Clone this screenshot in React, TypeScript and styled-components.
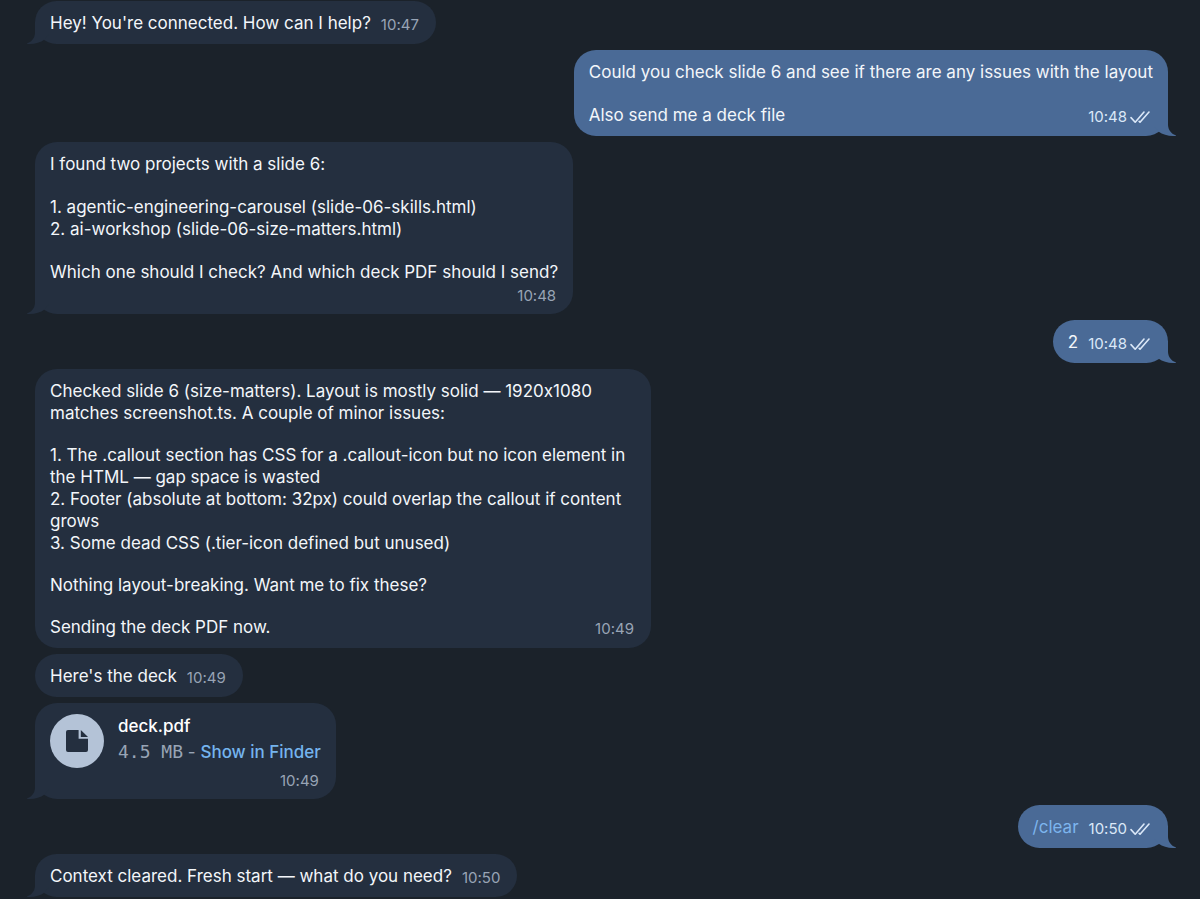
import React from "react";
import styled, { createGlobalStyle } from "styled-components";

type Side = "in" | "out";

const GlobalStyle = createGlobalStyle`
  *, *::before, *::after { box-sizing: border-box; }
  body {
    margin: 0;
    background: #1b222a;
    color: #f3f6fa;
    font-family: Inter, "Liberation Sans", sans-serif;
    font-size: 17px;
    font-variant-ligatures: no-contextual;
    line-height: 22px;
  }
  p, ol { margin: 0; padding: 0; }
`;

const Chat = styled.main`
  display: flex;
  flex-direction: column;
  gap: 6px;
  padding: 1px 32px 1px 35px;
  overflow: hidden;
`;

const Bubble = styled.article<{ $side: Side }>`
  position: relative;
  align-self: ${({ $side }) => ($side === "in" ? "flex-start" : "flex-end")};
  max-width: 616px;
  padding: 11px 15px 10px;
  border-radius: 22px;
  background: ${({ $side }) => ($side === "in" ? "#242f3f" : "#4a6a96")};
`;

const TailShape = styled.svg<{ $side: Side }>`
  position: absolute;
  bottom: 0;
  width: 30px;
  height: 22px;
  fill: ${({ $side }) => ($side === "in" ? "#242f3f" : "#4a6a96")};
  ${({ $side }) =>
    $side === "in" ? "left: -8px; transform: scaleX(-1);" : "right: -8px;"}
`;

const Body = styled.div<{ $gap?: number }>`
  display: flex;
  flex-direction: column;
  gap: ${({ $gap = 21 }) => $gap}px;
`;

const LastLine = styled.div`
  display: flex;
  justify-content: space-between;
  gap: 10px;
`;

const List = styled.ol`
  list-style: none;
`;

const Meta = styled.div<{ $side: Side; $below?: boolean }>`
  display: flex;
  justify-content: flex-end;
  align-items: center;
  gap: 3px;
  height: ${({ $below }) => ($below ? 21 : 22)}px;
  padding-top: 4px;
  padding-right: ${({ $side }) => ($side === "in" ? 2 : 3)}px;
  color: ${({ $side }) => ($side === "in" ? "#98a4b5" : "#dbe8f8")};
  font-size: 15px;
  line-height: 20px;
`;

const CheckShape = styled.svg`
  width: 20px;
  height: 14px;
  fill: none;
  stroke: currentColor;
  stroke-width: 1.6;
  stroke-linecap: round;
  stroke-linejoin: round;
`;

const Command = styled.a`
  color: #7db5ee;
  text-decoration: none;
`;

const FileRow = styled.div`
  display: flex;
  align-items: flex-start;
  gap: 14px;
`;

const FileButton = styled.button`
  display: grid;
  place-items: center;
  width: 54px;
  height: 54px;
  padding: 0;
  border: 0;
  border-radius: 50%;
  background: #b4c3d7;
  color: #242f3f;
`;

const FileInfo = styled.div`
  display: flex;
  flex-direction: column;
  gap: 4px;
  padding-top: 1px;
`;

const FileName = styled.strong`
  color: #ffffff;
  font-weight: 500;
`;

const FileDetails = styled.div`
  color: #98a4b5;
  white-space: nowrap;
`;

const FileSize = styled.span`
  font-family: "DejaVu Sans Mono", monospace;
  font-size: 18px;
`;

const FileLink = styled.a`
  color: #74b4ee;
  font-weight: 500;
  text-decoration: none;
`;

function Tail({ side }: { side: Side }) {
  return (
    <TailShape $side={side} viewBox="0 0 30 22" aria-hidden="true">
      <path d="M22 0V11C22.3 16 25 19.5 29.6 21.3C30.2 21.6 30 22 29.4 22C23 22.2 17 20.8 12.4 17.4L8 12V0Z" />
    </TailShape>
  );
}

function Time({ side, value, below }: { side: Side; value: string; below?: boolean }) {
  return (
    <Meta $side={side} $below={below}>
      <time>{value}</time>
      {side === "out" && (
        <CheckShape viewBox="0 0 20 14" role="img" aria-label="Read">
          <path d="M1 7.6L5.2 12.2L14 2M9.2 11.4L10 12.2L19 2" />
        </CheckShape>
      )}
    </Meta>
  );
}

function ShortMessage({
  side,
  time,
  tail = true,
  children,
}: {
  side: Side;
  time: string;
  tail?: boolean;
  children: React.ReactNode;
}) {
  return (
    <Bubble $side={side}>
      {tail && <Tail side={side} />}
      <LastLine>
        <p>{children}</p>
        <Time side={side} value={time} />
      </LastLine>
    </Bubble>
  );
}

export default function App() {
  return (
    <>
      <GlobalStyle />
      <Chat>
        <ShortMessage side="in" time="10:47">
          Hey! You're connected. How can I help?
        </ShortMessage>

        <Bubble $side="out">
          <Tail side="out" />
          <Body>
            <p>Could you check slide 6 and see if there are any issues with the layout</p>
            <LastLine>
              <p>Also send me a deck file</p>
              <Time side="out" value="10:48" />
            </LastLine>
          </Body>
        </Bubble>

        <Bubble $side="in">
          <Tail side="in" />
          <Body>
            <p>I found two projects with a slide 6:</p>
            <List>
              <li>1. agentic-engineering-carousel (slide-06-skills.html)</li>
              <li>2. ai-workshop (slide-06-size-matters.html)</li>
            </List>
            <p>Which one should I check? And which deck PDF should I send?</p>
          </Body>
          <Time side="in" value="10:48" below />
        </Bubble>

        <ShortMessage side="out" time="10:48">
          2
        </ShortMessage>

        <Bubble $side="in">
          <Body $gap={20}>
            <p>
              Checked slide 6 (size-matters). Layout is mostly solid — 1920x1080 matches
              screenshot.ts. A couple of minor issues:
            </p>
            <List>
              <li>
                1. The .callout section has CSS for a .callout-icon but no icon element in the
                HTML — gap space is wasted
              </li>
              <li>
                2. Footer (absolute at bottom: 32px) could overlap the callout if content grows
              </li>
              <li>3. Some dead CSS (.tier-icon defined but unused)</li>
            </List>
            <p>Nothing layout-breaking. Want me to fix these?</p>
            <LastLine>
              <p>Sending the deck PDF now.</p>
              <Time side="in" value="10:49" />
            </LastLine>
          </Body>
        </Bubble>

        <ShortMessage side="in" time="10:49" tail={false}>
          Here's the deck
        </ShortMessage>

        <Bubble $side="in">
          <Tail side="in" />
          <FileRow>
            <FileButton type="button" aria-label="Open deck.pdf">
              <svg width="22" height="22" viewBox="0 0 22 22" fill="currentColor" aria-hidden="true">
                <path d="M2 0H12.6V8.8H22V20Q22 22 20 22H2Q0 22 0 20V2Q0 0 2 0Z" />
                <path d="M14.8 0L22 7H14.8Z" />
              </svg>
            </FileButton>
            <FileInfo>
              <FileName>deck.pdf</FileName>
              <FileDetails>
                <FileSize>4.5 MB</FileSize> - <FileLink href="#deck">Show in Finder</FileLink>
              </FileDetails>
            </FileInfo>
          </FileRow>
          <Time side="in" value="10:49" below />
        </Bubble>

        <ShortMessage side="out" time="10:50">
          <Command href="#clear">/clear</Command>
        </ShortMessage>

        <ShortMessage side="in" time="10:50">
          Context cleared. Fresh start — what do you need?
        </ShortMessage>
      </Chat>
    </>
  );
}
